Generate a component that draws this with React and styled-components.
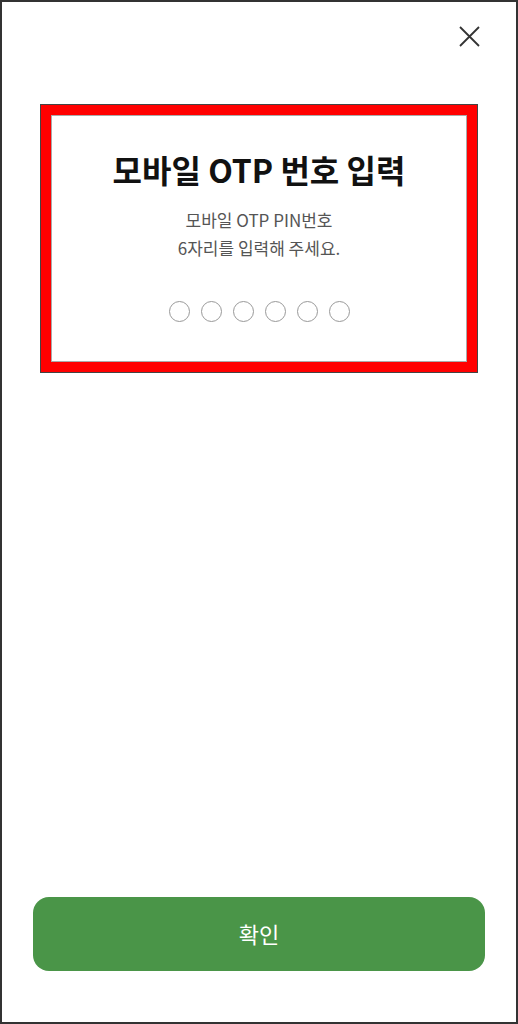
import React from 'react';
import styled, { createGlobalStyle } from 'styled-components';

const GlobalStyle = createGlobalStyle`
	html, body {
		margin: 0;
		padding: 0;
		background: #fff;
	}
	body {
		font-family: 'Noto Sans CJK KR', 'Noto Sans', sans-serif;
		color: #111;
	}
	* {
		box-sizing: border-box;
	}
`;

const Screen = styled.div`
	width: 518px;
	height: 1024px;
	border: 2px solid #333;
	display: flex;
	flex-direction: column;
	background: #fff;
`;

const Header = styled.div`
	display: flex;
	justify-content: flex-end;
	padding: 24px 36px 0 0;
	height: 103px;
`;

const CloseButton = styled.button`
	width: 21px;
	height: 21px;
	padding: 0;
	border: none;
	background: none;
	cursor: pointer;
	display: flex;

	svg {
		display: block;
	}
`;

// 강조 표시된 입력 영역
const OtpPanel = styled.section`
	margin: 0 0 0 39px;
	width: 436px;
	height: 267px;
	border: 10px solid #ff0000;
	box-shadow: 0 0 0 1px #444, inset 0 0 0 1px #aaa;
	display: flex;
	flex-direction: column;
	align-items: center;
	padding-top: 34px;
`;

const Title = styled.h1`
	margin: 0;
	font-size: 32px;
	line-height: 40px;
	font-weight: 700;
	color: #111;
`;

const Description = styled.p`
	margin: 17px 0 0;
	font-size: 17px;
	line-height: 28px;
	color: #555;
	text-align: center;
`;

const DotRow = styled.div`
	display: flex;
	gap: 11px;
	margin-top: 39px;
`;

const Dot = styled.span`
	width: 21px;
	height: 21px;
	border-radius: 50%;
	border: 1.5px solid ${({ $filled }) => ($filled ? '#4a9548' : '#999')};
	background: ${({ $filled }) => ($filled ? '#4a9548' : 'transparent')};
`;

const Spacer = styled.div`
	flex: 1;
`;

const ConfirmButton = styled.button`
	margin: 0 31px 51px;
	height: 74px;
	padding-bottom: 3px;
	border: none;
	border-radius: 16px;
	background: #4a9548;
	color: #fff;
	font-family: 'Noto Sans CJK KR', 'Noto Sans', sans-serif;
	font-size: 22px;
	font-weight: 400;
	cursor: pointer;
`;

const PIN_LENGTH = 6;

const App = () => {
	const pin = '';

	return (
		<>
			<GlobalStyle />
			<Screen>
				<Header>
					<CloseButton aria-label="닫기">
						<svg width="21" height="21" viewBox="0 0 21 21">
							<path d="M1 1 L20 20 M20 1 L1 20" stroke="#333" strokeWidth="1.8" fill="none" />
						</svg>
					</CloseButton>
				</Header>

				<OtpPanel>
					<Title>모바일 OTP 번호 입력</Title>
					<Description>
						모바일 OTP PIN번호
						<br />
						6자리를 입력해 주세요.
					</Description>
					<DotRow>
						{Array.from({ length: PIN_LENGTH }).map((_, i) => (
							<Dot key={i} $filled={i < pin.length} />
						))}
					</DotRow>
				</OtpPanel>

				<Spacer />

				<ConfirmButton>확인</ConfirmButton>
			</Screen>
		</>
	);
};

export default App;
